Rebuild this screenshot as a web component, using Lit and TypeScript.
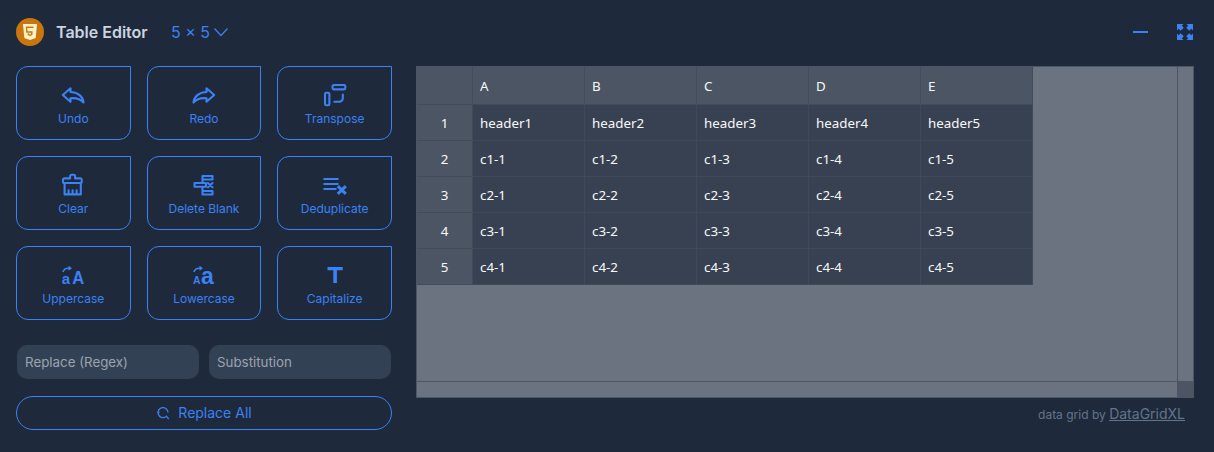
import { LitElement, html, css, svg } from "lit";
import { customElement } from "lit/decorators.js";

const s = (body: unknown) =>
  html`<svg class="ic" width="24" height="24" viewBox="0 0 24 24" fill="none" stroke="currentColor" stroke-width="2.100" stroke-linejoin="round" stroke-linecap="round">${body}</svg>`;

const icons: Record<string, unknown> = {
  undo: s(svg`<path d="M9.500 4.200 1.800 11l7.700 6.800v-3.600c5.500-.5 10 .8 13 4.300-.5-6-5.500-10.200-13-10.500z"/>`),
  redo: s(svg`<path d="M14.500 4.200 22.200 11l-7.700 6.800v-3.600c-5.500-.5-10 .8-13 4.300.5-6 5.500-10.200 13-10.500z"/>`),
  transpose: s(svg`<rect x="9.500" y="1" width="12.800" height="4.400" rx="1.300"/><rect x="2" y="8.700" width="4.400" height="12.600" rx="1.300"/><path d="M19.800 10.500v3.700a3.500 3.500 0 0 1-3.500 3.500h-5"/>`),
  clear: s(svg`<g transform="translate(-.4 -1.600)"><path d="M9.500 6V3.800a1.400 1.400 0 0 1 1.400-1.400h2.200a1.400 1.400 0 0 1 1.400 1.400V6h5.200a1.400 1.400 0 0 1 1.400 1.400v2.200a1 1 0 0 1-1 1H3.400a1 1 0 0 1-1-1V7.400A1.400 1.400 0 0 1 3.800 6z"/><path d="M4 10.600V22h16.200V10.600M8 22v-4M12 22v-4M16 22v-4"/></g>`),
  del: s(svg`<path d="M10.500 2h10v3.500h-10zM2.500 9h11.500v3.800H2.500zM10.500 5.500V9M10.500 12.800v4.200M10.500 17h10v3.500h-10z"/><path d="m16 9 4.500 4.200M20.500 9 16 13.200"/>`),
  dedupe: s(svg`<g stroke-linecap="butt"><path d="M.5 5h15M.5 10h15M.5 15h13" stroke-width="2.200"/><path d="m14.800 12.200 8 7.600M22.800 12.200l-8 7.600" stroke-width="3"/></g>`),
  upper: s(svg`<text x="0.800" y="20" class="glyph" font-size="15" fill="currentColor" stroke="none">a</text><text x="11.200" y="20" class="glyph" font-size="18" textLength="12" lengthAdjust="spacingAndGlyphs" fill="currentColor" stroke="none">A</text><path d="M1.800 8C3 4.700 5.500 4 8 4.200" stroke-width="1.500" stroke-linecap="butt"/><path d="m7.500 1.800 3.500 2.500-3.500 2.500z" fill="currentColor" stroke="none"/>`),
  lower: s(svg`<text x="1" y="20" class="glyph" font-size="10.500" fill="currentColor" stroke="none">A</text><text x="9" y="20" class="glyph" font-size="23" fill="currentColor" stroke="none">a</text><path d="M1.800 8C3 4.700 5.500 4 8 4.200" stroke-width="1.500" stroke-linecap="butt"/><path d="m7.500 1.800 3.500 2.500-3.500 2.500z" fill="currentColor" stroke="none"/>`),
  cap: s(svg`<path d="M4.500 3h15.200v3.200h-5.800V19h-3.600V6.200H4.500z" fill="currentColor" stroke="none"/>`),
};

const buttons = [
  ["undo", "Undo"], ["redo", "Redo"], ["transpose", "Transpose"],
  ["clear", "Clear"], ["del", "Delete Blank"], ["dedupe", "Deduplicate"],
  ["upper", "Uppercase"], ["lower", "Lowercase"], ["cap", "Capitalize"],
];

const cols = ["A", "B", "C", "D", "E"];
const rows = [
  ["header1", "header2", "header3", "header4", "header5"],
  ["c1-1", "c1-2", "c1-3", "c1-4", "c1-5"],
  ["c2-1", "c2-2", "c2-3", "c2-4", "c2-5"],
  ["c3-1", "c3-2", "c3-3", "c3-4", "c3-5"],
  ["c4-1", "c4-2", "c4-3", "c4-4", "c4-5"],
];

@customElement("app-root")
export class AppRoot extends LitElement {
  static styles = css`
    :host { display: block; width: 1214px; height: 452px; background: #1e293b; font-family: Inter, "Liberation Sans", sans-serif; color: #3b82f6; overflow: hidden; }
    .wrap { display: flex; flex-direction: column; padding: 16px 20px 0 16px; box-sizing: border-box; height: 452px; }
    .top { display: flex; align-items: center; height: 32px; margin-bottom: 18px; }
    .logo { width: 28px; height: 28px; border-radius: 50%; background: #ca760e; display: flex; align-items: center; justify-content: center; }
    .title { margin-left: 12px; font-size: 16px; font-weight: 600; color: #cbd5e1; width: 115px; white-space: nowrap; }
    .size { font-size: 16px; display: flex; align-items: center; gap: 3px; white-space: nowrap; }
    .spacer { flex: 1; }
    .dash { width: 15px; height: 2px; background: #3b82f6; margin: -1px 29px 0 0; }
    .full { display: block; margin-right: 1px; }
    .main { display: flex; gap: 24px; }
    .left { width: 376px; flex: none; }
    .btns { display: grid; grid-template-columns: repeat(3, 1fr); gap: 16px; }
    .btn { height: 74px; box-sizing: border-box; border: 1px solid #3b82f6; border-radius: 12px 0 12px 12px; display: flex; flex-direction: column; align-items: center; padding-top: 17px; font-size: 12px; gap: 3px; line-height: 16px; white-space: nowrap; }
    .ic { display: block; overflow: visible; }
    .glyph { font-family: "Liberation Sans", sans-serif; font-weight: 700; }
    .inputs { display: flex; gap: 10px; margin: 25px 1px 17px; }
    .inp { flex: 1; height: 34px; border-radius: 10px; background: #334155; color: #9ca3af; font-size: 13.330px; line-height: 34px; padding-left: 8px; }
    .all { height: 34px; box-sizing: border-box; border: 1px solid #3b82f6; border-radius: 17px; display: flex; align-items: center; justify-content: center; gap: 8px; font-size: 14px; padding-bottom: 1px; }
    .right { flex: 1; }
    .grid { width: 778px; height: 332px; box-sizing: border-box; border: 1px solid #4b5563; background: #6b7280; display: grid; grid-template-columns: 1fr 16px; grid-template-rows: 1fr 16px; }
    .table { display: grid; grid-template-columns: 56px repeat(5, 112px); grid-template-rows: 38px repeat(5, 36px); align-self: start; justify-self: start; font-family: "Noto Sans", sans-serif; font-size: 13.330px; color: #f9fafb; }
    .cell { box-sizing: border-box; padding-left: 7px; display: flex; align-items: center; background: #374151; border-right: 1px solid #3f4957; border-bottom: 1px solid #3f4957; }
    .head { background: #4b5563; border-color: #414b5a; }
    .rh { justify-content: center; padding-left: 0; }
    .vbar { border-left: 1px solid #4b5563; }
    .hbar { border-top: 1px solid #4b5563; }
    .corner { background: #4b5563; }
    .credit { text-align: right; padding: 7px 9px 0 0; font-size: 12px; color: #64748b; }
    .credit a { font-size: 14px; color: #64748b; text-decoration: underline; }
  `;

  render() {
    return html`<div class="wrap">
      <div class="top">
        <div class="logo">
          <svg width="14" height="16" viewBox="0 0 14 16"><path d="M0 0h14l-1.300 14L7 16l-5.700-2z" fill="#fef3c7"/><path d="M10.500 3.200h-7l.4 4.800h5l-.2 2.600-1.700.6-1.700-.6-.1-1.200" fill="none" stroke="#ca760e" stroke-width="1.400"/></svg>
        </div>
        <div class="title">Table Editor</div>
        <div class="size">5 × 5
          <svg width="16" height="16" viewBox="0 0 16 16" fill="none" stroke="currentColor" stroke-width="1.200"><path d="m1.500 4.500 6.500 7 6.500-7"/></svg>
        </div>
        <div class="spacer"></div>
        <div class="dash"></div>
        <svg class="full" width="16" height="16" viewBox="0 0 16 16" fill="#3b82f6"><path d="M0 0h6.500L4.800 1.700l2 2-3.100 3.100-2-2L0 6.500zM16 0v6.500l-1.700-1.700-2 2-3.100-3.100 2-2L9.500 0zM0 16V9.500l1.700 1.700 2-2 3.100 3.100-2 2L6.500 16zM16 16H9.500l1.700-1.700-2-2 3.100-3.100 2 2L16 9.500z"/></svg>
      </div>
      <div class="main">
        <div class="left">
          <div class="btns">
            ${buttons.map(([i, t]) => html`<div class="btn">${icons[i]}<span>${t}</span></div>`)}
          </div>
          <div class="inputs"><div class="inp">Replace (Regex)</div><div class="inp">Substitution</div></div>
          <div class="all">
            <svg width="14" height="14" viewBox="0 0 14 14" fill="none" stroke="currentColor" stroke-width="1.300"><path d="M12 6.500a5 5 0 1 0-2.500 4.400M9.800 9.800l3 3.200"/><path d="M1.500 6.500h2"/></svg>
            <span>Replace All</span>
          </div>
        </div>
        <div class="right">
          <div class="grid">
            <div class="table">
              <div class="cell head"></div>
              ${cols.map((c) => html`<div class="cell head">${c}</div>`)}
              ${rows.map((r, i) => html`<div class="cell head rh">${i + 1}</div>${r.map((c) => html`<div class="cell">${c}</div>`)}`)}
            </div>
            <div class="vbar"></div>
            <div class="hbar"></div>
            <div class="corner"></div>
          </div>
          <div class="credit">data grid by <a>DataGridXL</a></div>
        </div>
      </div>
    </div>`;
  }
}
